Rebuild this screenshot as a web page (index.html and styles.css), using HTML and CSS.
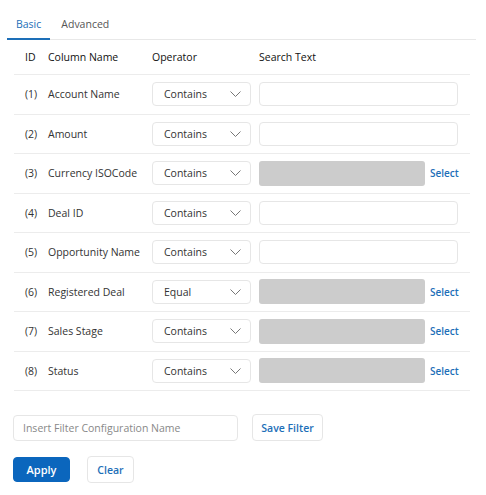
FILE: index.html
```html
<!DOCTYPE html>
<html lang="en">
<head>
    <meta charset="UTF-8">
    <meta name="viewport" content="width=device-width, initial-scale=1.0">
    <title>Filter</title>
    <link rel="stylesheet" href="styles.css">
</head>
<body>
    <div class="panel">
        <div class="tabs">
            <div class="tab active">Basic</div>
            <div class="tab">Advanced</div>
        </div>

        <div class="grid">
            <div class="row head">
                <div class="id">ID</div>
                <div>Column Name</div>
                <div>Operator</div>
                <div>Search Text</div>
            </div>
            <div class="row">
                <div class="id">(1)</div>
                <div>Account Name</div>
                <div><div class="select">Contains<svg class="chev" viewBox="0 0 11 6"><polyline points="0.5,0.5 5.5,5.5 10.5,0.5"/></svg></div></div>
                <div class="search"><div class="input"></div></div>
            </div>
            <div class="row">
                <div class="id">(2)</div>
                <div>Amount</div>
                <div><div class="select">Contains<svg class="chev" viewBox="0 0 11 6"><polyline points="0.5,0.5 5.5,5.5 10.5,0.5"/></svg></div></div>
                <div class="search"><div class="input"></div></div>
            </div>
            <div class="row">
                <div class="id">(3)</div>
                <div>Currency ISOCode</div>
                <div><div class="select">Contains<svg class="chev" viewBox="0 0 11 6"><polyline points="0.5,0.5 5.5,5.5 10.5,0.5"/></svg></div></div>
                <div class="search"><div class="locked"></div><a class="pick">Select</a></div>
            </div>
            <div class="row">
                <div class="id">(4)</div>
                <div>Deal ID</div>
                <div><div class="select">Contains<svg class="chev" viewBox="0 0 11 6"><polyline points="0.5,0.5 5.5,5.5 10.5,0.5"/></svg></div></div>
                <div class="search"><div class="input"></div></div>
            </div>
            <div class="row">
                <div class="id">(5)</div>
                <div>Opportunity Name</div>
                <div><div class="select">Contains<svg class="chev" viewBox="0 0 11 6"><polyline points="0.5,0.5 5.5,5.5 10.5,0.5"/></svg></div></div>
                <div class="search"><div class="input"></div></div>
            </div>
            <div class="row">
                <div class="id">(6)</div>
                <div>Registered Deal</div>
                <div><div class="select">Equal<svg class="chev" viewBox="0 0 11 6"><polyline points="0.5,0.5 5.5,5.5 10.5,0.5"/></svg></div></div>
                <div class="search"><div class="locked"></div><a class="pick">Select</a></div>
            </div>
            <div class="row">
                <div class="id">(7)</div>
                <div>Sales Stage</div>
                <div><div class="select">Contains<svg class="chev" viewBox="0 0 11 6"><polyline points="0.5,0.5 5.5,5.5 10.5,0.5"/></svg></div></div>
                <div class="search"><div class="locked"></div><a class="pick">Select</a></div>
            </div>
            <div class="row">
                <div class="id">(8)</div>
                <div>Status</div>
                <div><div class="select">Contains<svg class="chev" viewBox="0 0 11 6"><polyline points="0.5,0.5 5.5,5.5 10.5,0.5"/></svg></div></div>
                <div class="search"><div class="locked"></div><a class="pick">Select</a></div>
            </div>
        </div>

        <div class="save">
            <div class="name">Insert Filter Configuration Name</div>
            <button class="btn">Save Filter</button>
        </div>
        <div class="actions">
            <button class="btn primary">Apply</button>
            <button class="btn clear">Clear</button>
        </div>
    </div>
</body>
</html>
```

FILE: styles.css
```css
body {
    margin: 0;
    background: #fff;
    font-family: 'Open Sans', sans-serif;
    font-size: 10.5px;
    color: #333;
}
.panel {
    padding: 0 0 0 7px;
}
.tabs {
    display: flex;
    width: 469px;
    height: 40px;
    box-sizing: border-box;
    border-bottom: 1px solid #e8e8e8;
    padding-top: 17px;
}
.tab {
    padding: 0 9px;
    margin-right: 2px;
    color: #555;
    box-sizing: border-box;
    height: 23px;
}
.tab.active {
    color: #1d6fb8;
    border-bottom: 2px solid #1d6fb8;
}
.grid {
    width: 456px;
    margin-left: 7px;
}
.row {
    display: grid;
    grid-template-columns: 34px 104px 107px 1fr;
    align-items: center;
    height: 39.5px;
    box-sizing: border-box;
    border-bottom: 1px solid #ececec;
}
.row.head {
    height: 35px;
    color: #111;
    font-weight: 500;
}
.id {
    padding-left: 11px;
}
.select {
    display: flex;
    align-items: center;
    justify-content: space-between;
    width: 99px;
    height: 24px;
    box-sizing: border-box;
    border: 1px solid #e6e6e6;
    border-radius: 4px;
    padding: 0 9px 0 11px;
}
.chev {
    width: 11px;
    height: 6px;
    fill: none;
    stroke: #777;
    stroke-width: 1;
}
.search {
    display: flex;
    align-items: center;
}
.input {
    width: 199px;
    height: 24px;
    box-sizing: border-box;
    border: 1px solid #e6e6e6;
    border-radius: 4px;
}
.locked {
    width: 166px;
    height: 25px;
    background: #cccccc;
    border-radius: 3px;
}
.pick {
    margin-left: 5px;
    color: #1d6fb8;
    font-weight: 600;
    font-size: 10px;
}
.save {
    display: flex;
    align-items: center;
    gap: 14px;
    margin: 23px 0 0 6px;
}
.name {
    width: 225px;
    height: 26px;
    box-sizing: border-box;
    border: 1px solid #e6e6e6;
    border-radius: 4px;
    padding: 0 9px;
    line-height: 24px;
    color: #888;
}
.btn {
    font-family: 'Open Sans', sans-serif;
    font-size: 10.5px;
    font-weight: 600;
    color: #1d6fb8;
    background: #fff;
    border: 1px solid #e6e6e6;
    border-radius: 4px;
    height: 27px;
    width: 71px;
    padding: 0;
}
.actions {
    display: flex;
    align-items: center;
    gap: 17px;
    margin: 15px 0 0 6px;
}
.btn.primary {
    background: #0b66bd;
    border-color: #0b66bd;
    color: #fff;
    height: 25px;
    width: 57px;
    font-size: 11px;
}
.btn.clear {
    width: 47px;
}
```
